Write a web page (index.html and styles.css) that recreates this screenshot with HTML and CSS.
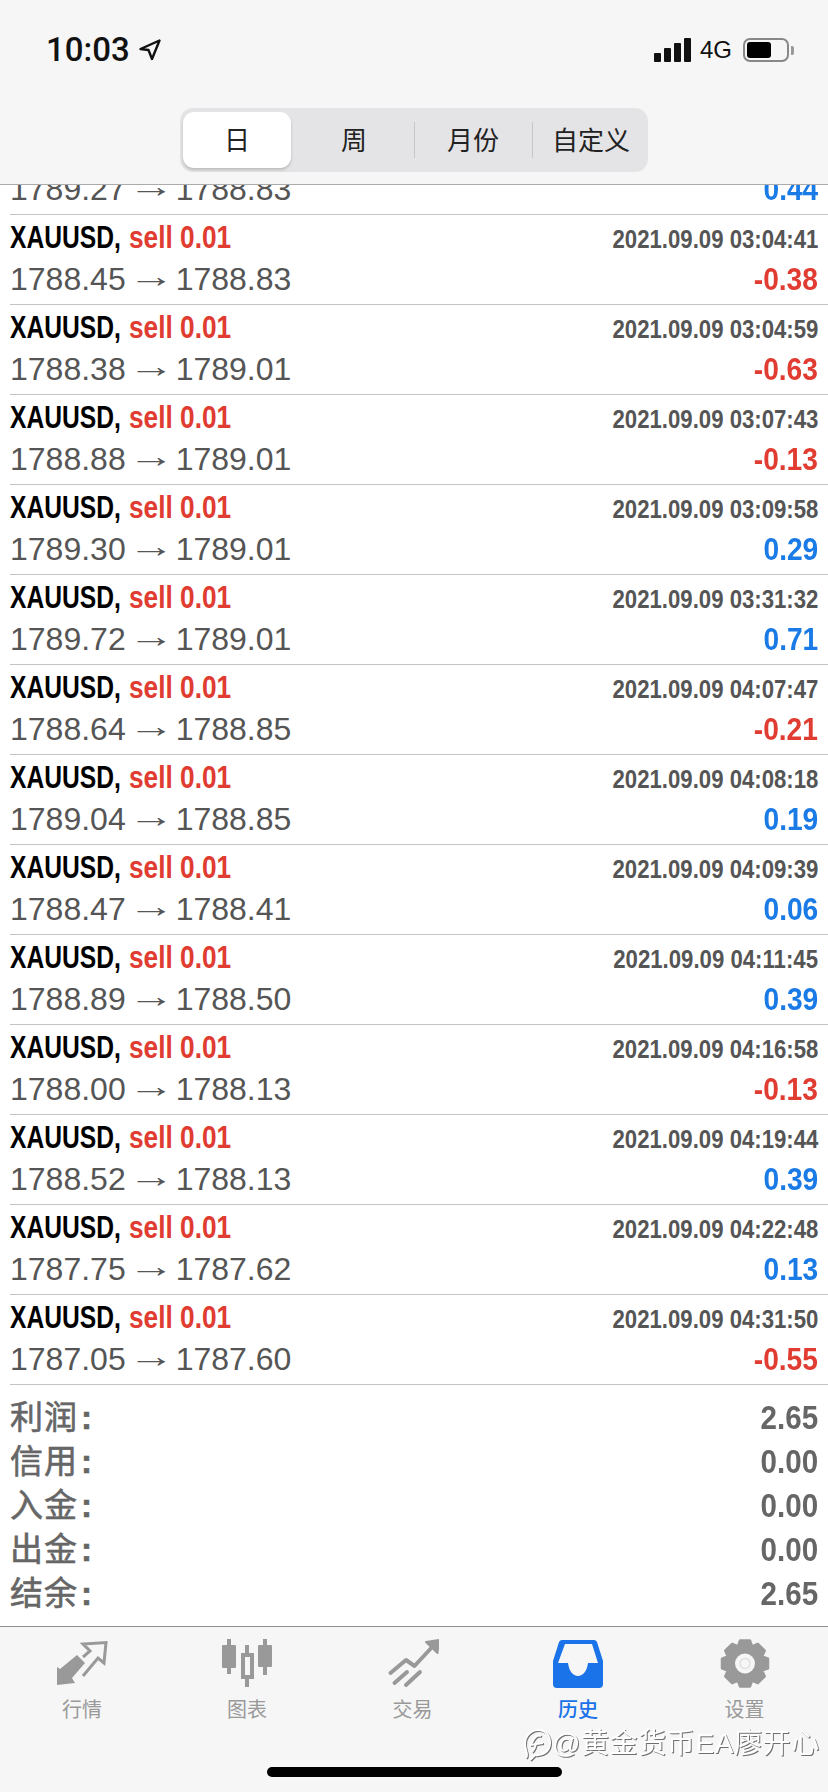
FILE: index.html
```html
<!DOCTYPE html>
<html lang="zh">
<head>
    <meta charset="UTF-8">
    <meta name="viewport" content="width=device-width, initial-scale=1.0">
    <title>历史</title>
    <link rel="stylesheet" href="styles.css">
</head>
<body>
    <div class="app">
        <header class="topbar">
            <div class="statusbar">
                <div class="status-left">
                    <span class="time">10:03</span>
                    <svg class="loc" width="22" height="22" viewBox="0 0 22 22"><path d="M20.500 1.500 1.500 10l8 1L13 20z" fill="none" stroke="#111" stroke-width="2.4" stroke-linejoin="round"/></svg>
                </div>
                <div class="status-right">
                    <div class="signal"><i class="s1"></i><i class="s2"></i><i class="s3"></i><i class="s4"></i></div>
                    <span class="net">4G</span>
                    <div class="battery"><div class="battery-fill"></div></div>
                    <div class="battery-cap"></div>
                </div>
            </div>
            <div class="segments">
                <div class="seg seg-active">日</div>
                <div class="seg seg-week">周</div>
                <div class="seg seg-line">月份</div>
                <div class="seg seg-line seg-custom">自定义</div>
            </div>
        </header>

        <main class="list">
            <div class="scroll">
                <div class="row row-cut">
                    <div class="line"><span class="price">1789.27<span class="arrow">→</span>1788.83</span><span class="pl pos">0.44</span></div>
                </div>
                <div class="row">
                    <div class="line"><span class="symbol">XAUUSD,</span><span class="side">sell 0.01</span><span class="date">2021.09.09 03:04:41</span></div>
                    <div class="line"><span class="price">1788.45<span class="arrow">→</span>1788.83</span><span class="pl neg">-0.38</span></div>
                </div>
                <div class="row">
                    <div class="line"><span class="symbol">XAUUSD,</span><span class="side">sell 0.01</span><span class="date">2021.09.09 03:04:59</span></div>
                    <div class="line"><span class="price">1788.38<span class="arrow">→</span>1789.01</span><span class="pl neg">-0.63</span></div>
                </div>
                <div class="row">
                    <div class="line"><span class="symbol">XAUUSD,</span><span class="side">sell 0.01</span><span class="date">2021.09.09 03:07:43</span></div>
                    <div class="line"><span class="price">1788.88<span class="arrow">→</span>1789.01</span><span class="pl neg">-0.13</span></div>
                </div>
                <div class="row">
                    <div class="line"><span class="symbol">XAUUSD,</span><span class="side">sell 0.01</span><span class="date">2021.09.09 03:09:58</span></div>
                    <div class="line"><span class="price">1789.30<span class="arrow">→</span>1789.01</span><span class="pl pos">0.29</span></div>
                </div>
                <div class="row">
                    <div class="line"><span class="symbol">XAUUSD,</span><span class="side">sell 0.01</span><span class="date">2021.09.09 03:31:32</span></div>
                    <div class="line"><span class="price">1789.72<span class="arrow">→</span>1789.01</span><span class="pl pos">0.71</span></div>
                </div>
                <div class="row">
                    <div class="line"><span class="symbol">XAUUSD,</span><span class="side">sell 0.01</span><span class="date">2021.09.09 04:07:47</span></div>
                    <div class="line"><span class="price">1788.64<span class="arrow">→</span>1788.85</span><span class="pl neg">-0.21</span></div>
                </div>
                <div class="row">
                    <div class="line"><span class="symbol">XAUUSD,</span><span class="side">sell 0.01</span><span class="date">2021.09.09 04:08:18</span></div>
                    <div class="line"><span class="price">1789.04<span class="arrow">→</span>1788.85</span><span class="pl pos">0.19</span></div>
                </div>
                <div class="row">
                    <div class="line"><span class="symbol">XAUUSD,</span><span class="side">sell 0.01</span><span class="date">2021.09.09 04:09:39</span></div>
                    <div class="line"><span class="price">1788.47<span class="arrow">→</span>1788.41</span><span class="pl pos">0.06</span></div>
                </div>
                <div class="row">
                    <div class="line"><span class="symbol">XAUUSD,</span><span class="side">sell 0.01</span><span class="date">2021.09.09 04:11:45</span></div>
                    <div class="line"><span class="price">1788.89<span class="arrow">→</span>1788.50</span><span class="pl pos">0.39</span></div>
                </div>
                <div class="row">
                    <div class="line"><span class="symbol">XAUUSD,</span><span class="side">sell 0.01</span><span class="date">2021.09.09 04:16:58</span></div>
                    <div class="line"><span class="price">1788.00<span class="arrow">→</span>1788.13</span><span class="pl neg">-0.13</span></div>
                </div>
                <div class="row">
                    <div class="line"><span class="symbol">XAUUSD,</span><span class="side">sell 0.01</span><span class="date">2021.09.09 04:19:44</span></div>
                    <div class="line"><span class="price">1788.52<span class="arrow">→</span>1788.13</span><span class="pl pos">0.39</span></div>
                </div>
                <div class="row">
                    <div class="line"><span class="symbol">XAUUSD,</span><span class="side">sell 0.01</span><span class="date">2021.09.09 04:22:48</span></div>
                    <div class="line"><span class="price">1787.75<span class="arrow">→</span>1787.62</span><span class="pl pos">0.13</span></div>
                </div>
                <div class="row">
                    <div class="line"><span class="symbol">XAUUSD,</span><span class="side">sell 0.01</span><span class="date">2021.09.09 04:31:50</span></div>
                    <div class="line"><span class="price">1787.05<span class="arrow">→</span>1787.60</span><span class="pl neg">-0.55</span></div>
                </div>
                <div class="summary">
                    <div class="sum-row"><span class="sum-label">利润<span class="colon">:</span></span><span class="sum-value">2.65</span></div>
                    <div class="sum-row"><span class="sum-label">信用<span class="colon">:</span></span><span class="sum-value">0.00</span></div>
                    <div class="sum-row"><span class="sum-label">入金<span class="colon">:</span></span><span class="sum-value">0.00</span></div>
                    <div class="sum-row"><span class="sum-label">出金<span class="colon">:</span></span><span class="sum-value">0.00</span></div>
                    <div class="sum-row"><span class="sum-label">结余<span class="colon">:</span></span><span class="sum-value">2.65</span></div>
                </div>
            </div>
        </main>

        <nav class="tabbar">
            <div class="tabs">
                <div class="tab">
                    <svg class="tab-icon" width="52" height="50" viewBox="0 0 52 50">
                        <path d="M27 18 34 12 27 5 50 3.500 48 24 42 19 27 37" fill="none" stroke="#999" stroke-width="3"/>
                        <path d="M1 46V28L4 30 21 16 29 24 16 39 19 44Z" fill="#999"/>
                    </svg>
                    <span class="tab-label">行情</span>
                </div>
                <div class="tab">
                    <svg class="tab-icon" width="52" height="50" viewBox="0 0 52 50">
                        <path d="M8 0v35M26 6v42M44 0v36" stroke="#999" stroke-width="4" fill="none"/>
                        <rect x="1" y="6" width="14" height="23" rx="1" fill="#999"/>
                        <rect x="22" y="16" width="9" height="22" fill="#f6f6f6" stroke="#999" stroke-width="4"/>
                        <rect x="37" y="6" width="14" height="22" rx="1" fill="#999"/>
                    </svg>
                    <span class="tab-label">图表</span>
                </div>
                <div class="tab">
                    <svg class="tab-icon" width="52" height="50" viewBox="0 0 52 50">
                        <path d="M3.500 34 19 21 27.500 27 47 6M7.500 44 20 33M19 46 33 33" fill="none" stroke="#999" stroke-width="4" stroke-linecap="round" stroke-linejoin="round"/>
                        <path d="M39 3 52 1 50.500 14Z" fill="#999" stroke="#999" stroke-width="2" stroke-linejoin="round"/>
                    </svg>
                    <span class="tab-label">交易</span>
                </div>
                <div class="tab tab-active">
                    <svg class="tab-icon" width="52" height="50" viewBox="0 0 52 50">
                        <path d="M10 1H42Q44 1 45 3L51 22V45Q51 49 47 49H5Q1 49 1 45V22L7 3Q8 1 10 1Z" fill="#1a73e8"/>
                        <path d="M13 5H40L46 24H36C35 32 31 37 26 37S17 32 16 24H6Z" fill="#f6f6f6"/>
                    </svg>
                    <span class="tab-label">历史</span>
                </div>
                <div class="tab">
                    <svg class="tab-icon" width="52" height="50" viewBox="0 0 52 50">
                        <path d="M21.100 1.500H30.900L33.100 7.400 38.800 4.800 45.700 11.700 43.100 17.400 49 19.600V29.400L43.100 31.600 45.700 37.300 38.800 44.200 33.100 41.600 30.900 47.500H21.100L18.900 41.600 13.200 44.200 6.300 37.300 8.900 31.600 3 29.400V19.600L8.900 17.400 6.300 11.700 13.200 4.800 18.900 7.400Z" fill="#999" stroke="#999" stroke-width="2.500" stroke-linejoin="round"/>
                        <circle cx="26" cy="24.500" r="10" fill="#f6f6f6"/>
                        <circle cx="26" cy="24.500" r="5" fill="none" stroke="#e0e0e0" stroke-width="1.500"/>
                    </svg>
                    <span class="tab-label">设置</span>
                </div>
            </div>
            <div class="home-bar"></div>
        </nav>

        <div class="watermark">
            <svg width="30" height="34" viewBox="0 0 30 34"><path d="M4 31 C7 27 3 24 3 17 C3 8 10 3 16 3 C24 3 28 9 28 16 C28 24 21 29 13 28 L8 33 M10 16 C13 8 17 8 19 9 M8 18 L21 16 M14 17 C13 21 12 23 10 25" fill="none" stroke="#fff" stroke-width="2"/></svg>
            <span class="watermark-text">@黄金货币EA廖开心</span>
        </div>
    </div>
</body>
</html>
```

FILE: styles.css
```css
/* Page */
body {
    margin: 0;
    background-color: #fff;
    font-family: "Liberation Sans", "Noto Sans CJK SC", sans-serif;
}

.app {
    position: relative;
    width: 828px;
    height: 1792px;
    display: flex;
    flex-direction: column;
    overflow: hidden;
}

/* Top bar */
.topbar {
    height: 185px;
    box-sizing: border-box;
    flex-shrink: 0;
    background-color: #f6f6f6;
    border-bottom: 1px solid #ababab;
}

.statusbar {
    height: 108px;
    display: flex;
    justify-content: space-between;
    align-items: flex-start;
    padding: 34px 34px 0 46px;
    box-sizing: border-box;
}

.status-left {
    display: flex;
    align-items: center;
    gap: 9px;
}

.time {
    font-size: 33px;
    line-height: 32px;
    font-weight: 500;
    color: #111;
    font-family: Roboto, sans-serif;
}

.status-right {
    display: flex;
    align-items: center;
    height: 32px;
}

.signal {
    display: flex;
    align-items: flex-end;
    gap: 3px;
    height: 24px;
}

.signal i {
    display: block;
    width: 7px;
    background-color: #111;
    border-radius: 1px;
}

.s1 { height: 9px; }
.s2 { height: 14px; }
.s3 { height: 19px; }
.s4 { height: 24px; }

.net {
    margin-left: 9px;
    font-size: 24px;
    color: #111;
}

.battery {
    margin-left: 11px;
    width: 46px;
    height: 24px;
    border: 2px solid #888;
    border-radius: 7px;
    box-sizing: border-box;
    padding: 2px;
}

.battery-fill {
    width: 24px;
    height: 16px;
    background-color: #000;
    border-radius: 3px;
}

.battery-cap {
    margin-left: 2px;
    width: 3px;
    height: 9px;
    background-color: #999;
    border-radius: 0 2px 2px 0;
}

/* Segmented control */
.segments {
    width: 468px;
    height: 64px;
    margin-left: 180px;
    padding: 4px 3px;
    box-sizing: border-box;
    background-color: #e4e4e6;
    border-radius: 13px;
    display: grid;
    grid-template-columns: 108px 123px 118px 113px;
}

.seg {
    display: flex;
    align-items: center;
    justify-content: center;
    padding-bottom: 3px;
    font-size: 26px;
    color: #222;
    font-family: "Noto Sans CJK SC", sans-serif;
}

.seg-active {
    background-color: #fff;
    border-radius: 11px;
    box-shadow: 0 2px 3px rgba(0, 0, 0, 0.18);
}

.seg-week {
    padding-left: 3px;
}

.seg-line {
    position: relative;
}

.seg-custom {
    padding-left: 5px;
}

.seg-line::before {
    content: "";
    position: absolute;
    left: 0;
    top: 10px;
    bottom: 10px;
    width: 1px;
    background-color: #c6c6c8;
}

/* Trade list */
.list {
    flex: 1;
    overflow: hidden;
    background-color: #fff;
}

.scroll {
    margin-top: -16px;
    padding-left: 10px;
}

.row {
    height: 90px;
    box-sizing: border-box;
    border-bottom: 1px solid #c4c4c4;
    padding: 3px 10px 0 0;
}

.row-cut {
    height: 46px;
    padding-top: 0;
}

.line {
    height: 41px;
    line-height: 41px;
    display: flex;
    align-items: baseline;
    white-space: pre;
}

/* The reference text is condensed, so the spans are squeezed sideways */
.symbol {
    width: 119px;
    flex-shrink: 0;
    font-size: 32px;
    font-weight: bold;
    color: #000;
    transform: translateY(-1px) scaleX(0.77);
    transform-origin: left;
}

.side {
    width: 102px;
    flex-shrink: 0;
    font-size: 32px;
    font-weight: bold;
    color: #e03c31;
    transform: translateY(-1px) scaleX(0.82);
    transform-origin: left;
}

.date {
    margin-left: auto;
    font-size: 26px;
    font-weight: bold;
    color: #555;
    transform: translateY(-1px) scaleX(0.853);
    transform-origin: right;
}

.price {
    font-size: 32px;
    color: #555;
}

.arrow {
    display: inline-block;
    width: 50px;
    text-align: center;
    transform: translateY(-3px) scaleX(1.45);
}

.pl {
    margin-left: auto;
    font-size: 32px;
    font-weight: bold;
    transform: scaleX(0.88);
    transform-origin: right;
}

.pos { color: #1a7ae6; }
.neg { color: #e03c31; }

/* Totals */
.summary {
    padding: 10px 10px 0 0;
}

.sum-row {
    height: 44px;
    line-height: 44px;
    display: flex;
    justify-content: space-between;
    color: #666;
}

.sum-label {
    line-height: 40px;
    font-size: 33px;
    letter-spacing: 1px;
    -webkit-text-stroke: 0.6px #666;
    font-family: "Noto Sans CJK SC", sans-serif;
}

.colon {
    margin-left: 3px;
    font-weight: bold;
    font-family: "Liberation Sans", sans-serif;
}

.sum-value {
    font-size: 34px;
    font-weight: bold;
    transform: scaleX(0.87);
    transform-origin: right;
}

/* Tab bar */
.tabbar {
    height: 166px;
    flex-shrink: 0;
    box-sizing: border-box;
    background-color: #f6f6f6;
    border-top: 1px solid #8e8e8e;
    position: relative;
}

.tabs {
    display: grid;
    grid-template-columns: 164px 166px 165px 166px 167px;
    padding-top: 12px;
}

.tab {
    display: flex;
    flex-direction: column;
    align-items: center;
    color: #999;
}

.tab-label {
    margin-top: 6px;
    font-size: 20px;
    line-height: 28px;
    font-family: "Noto Sans CJK SC", sans-serif;
}

.tab-active .tab-label {
    color: #1a73e8;
    font-weight: 500;
}

.home-bar {
    position: absolute;
    left: 267px;
    top: 140px;
    width: 295px;
    height: 10px;
    background-color: #000;
    border-radius: 5px;
}

/* Watermark over the tab bar */
.watermark {
    position: absolute;
    left: 522px;
    top: 1727px;
    display: flex;
    align-items: center;
    filter: drop-shadow(1px 1px 0 rgba(0, 0, 0, 0.55));
}

.watermark-text {
    font-size: 28px;
    line-height: 34px;
    letter-spacing: 0.6px;
    color: #fff;
    white-space: nowrap;
}
```
